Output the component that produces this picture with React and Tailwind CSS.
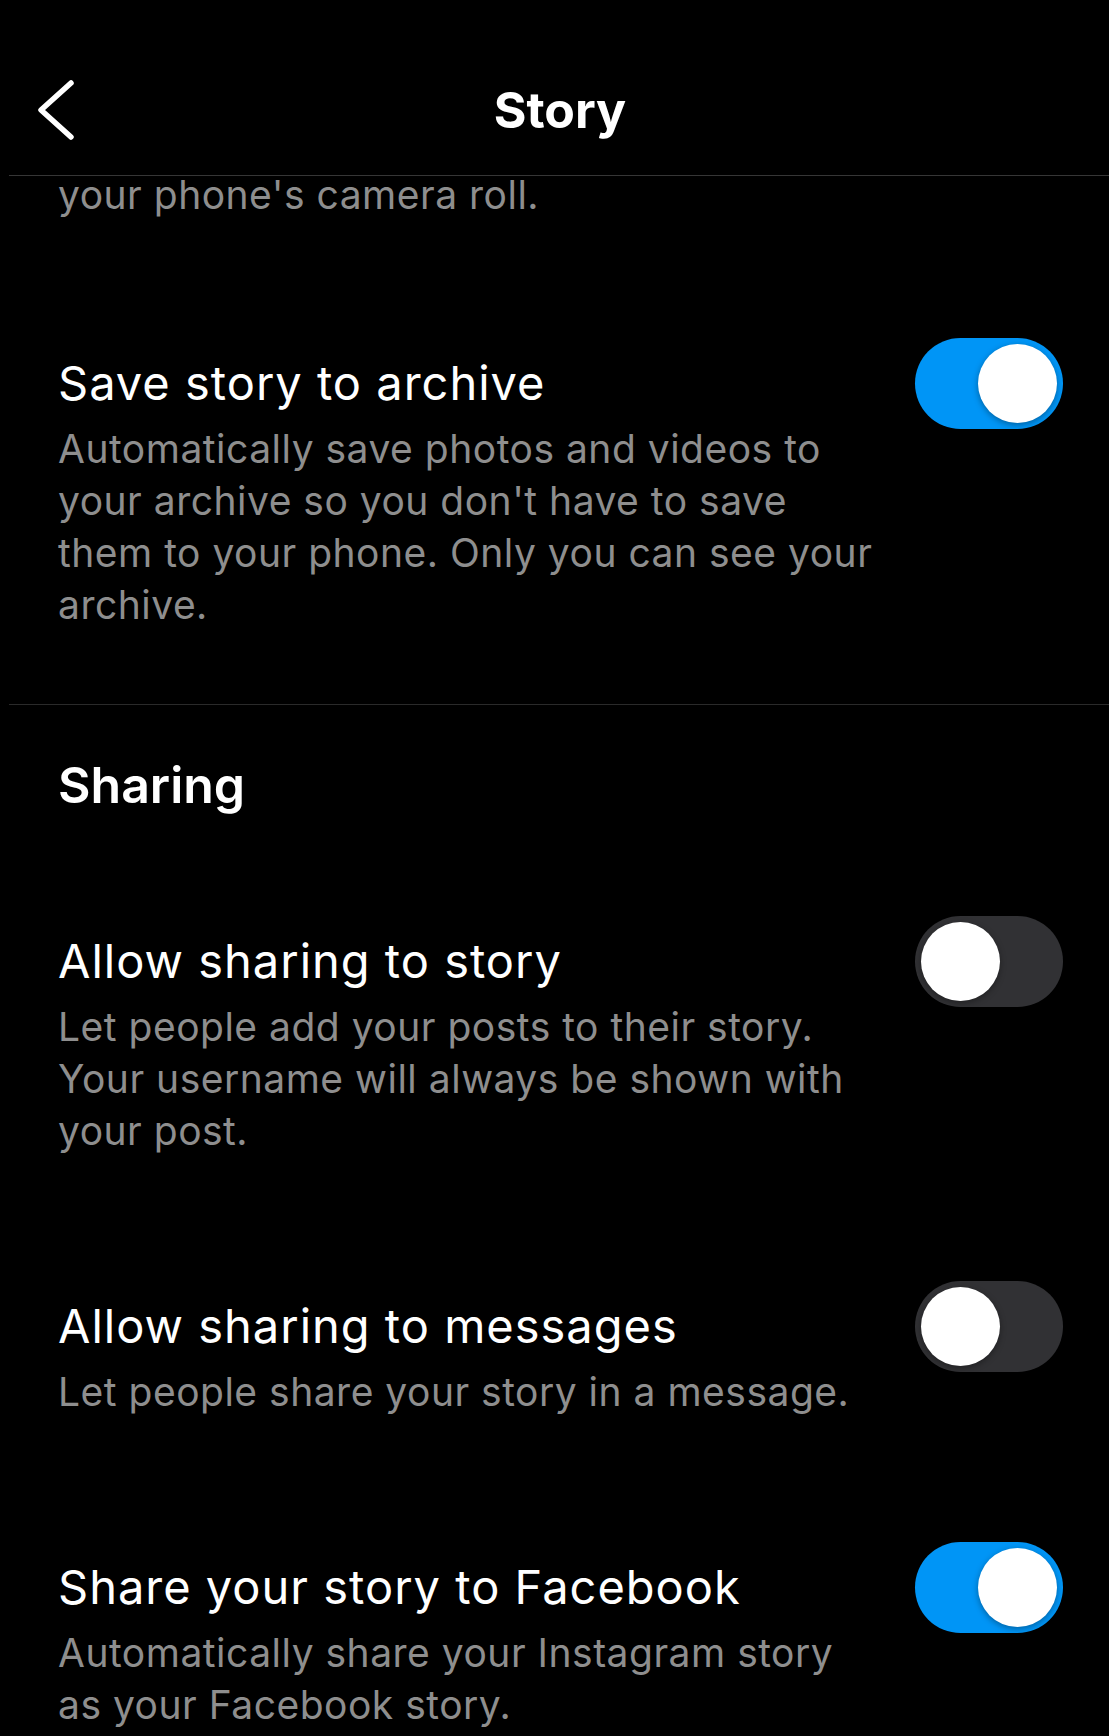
import React, { useState } from 'react';

const Toggle = ({ on, onChange }) => (
    <button
        type="button"
        onClick={onChange}
        className={`relative shrink-0 w-[148px] h-[91px] rounded-full transition-colors ${on ? 'bg-[#0095f6]' : 'bg-[#313134]'}`}
    >
        <span
            className={`absolute top-[6px] w-[79px] h-[79px] rounded-full bg-white shadow-[0_2px_6px_rgba(0,0,0,0.35)] transition-all ${on ? 'left-[63px]' : 'left-[6px]'}`}
        />
    </button>
);

const SettingRow = ({ title, description, on, onToggle }) => (
    <div className="pt-[70px] pb-[71px] pl-[58px] pr-[46px]">
        <div className="flex h-[56px] items-center justify-between">
            <span className="text-[47px] leading-[56px] tracking-[1px] text-white">{title}</span>
            <Toggle on={on} onChange={onToggle} />
        </div>
        <p className="mt-[12px] max-w-[818px] text-[39px] leading-[52px] tracking-[0.5px] text-[#8e8e8e]">
            {description}
        </p>
    </div>
);

const App = () => {
    const [settings, setSettings] = useState({
        archive: true,
        shareStory: false,
        shareMessages: false,
        facebook: true,
    });

    const flip = (key) => setSettings((s) => ({ ...s, [key]: !s[key] }));

    return (
        <div className="h-[1736px] w-full overflow-hidden bg-black font-['Inter','Noto_Sans',sans-serif] text-white">
            {/* top bar */}
            <header className="grid h-[175px] grid-cols-[1fr_auto_1fr] items-center pt-[44px]">
                <button type="button" className="ml-[35px] flex h-[70px] w-[50px] items-center">
                    <svg width="42" height="64" viewBox="0 0 42 64" fill="none">
                        <polyline
                            points="36,5 6,32 36,59"
                            stroke="white"
                            strokeWidth="5.5"
                            strokeLinecap="round"
                            strokeLinejoin="round"
                        />
                    </svg>
                </button>
                <h1 className="pl-[11px] text-[50px] font-bold leading-[60px] text-white">Story</h1>
                <div />
            </header>
            <div className="ml-[9px] h-px bg-[#363636]" />

            {/* tail of the setting above, scrolled under the bar */}
            <p className="pt-[4px] pb-[75px] pl-[58px] text-[39px] leading-[30px] tracking-[0.5px] text-[#8e8e8e]">
                your phone's camera roll.
            </p>

            <SettingRow
                title="Save story to archive"
                description="Automatically save photos and videos to your archive so you don't have to save them to your phone. Only you can see your archive."
                on={settings.archive}
                onToggle={() => flip('archive')}
            />

            <div className="mt-[2px] ml-[9px] h-px bg-[#2a2a2a]" />

            <h2 className="mt-[50px] pb-[48px] pl-[58px] text-[50px] font-semibold leading-[60px]">Sharing</h2>

            <SettingRow
                title="Allow sharing to story"
                description="Let people add your posts to their story. Your username will always be shown with your post."
                on={settings.shareStory}
                onToggle={() => flip('shareStory')}
            />
            <SettingRow
                title="Allow sharing to messages"
                description="Let people share your story in a message."
                on={settings.shareMessages}
                onToggle={() => flip('shareMessages')}
            />
            <SettingRow
                title="Share your story to Facebook"
                description="Automatically share your Instagram story as your Facebook story."
                on={settings.facebook}
                onToggle={() => flip('facebook')}
            />
        </div>
    );
};

export default App;
